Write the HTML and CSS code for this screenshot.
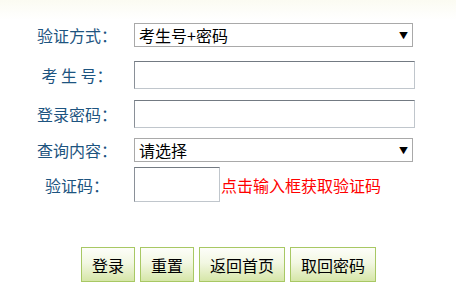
FILE: index.html
```html
<!DOCTYPE html>
<html lang="zh-CN">
<head>
  <meta charset="UTF-8" />
  <meta name="viewport" content="width=device-width, initial-scale=1.0"/>
  <title>成绩查询</title>
  <link rel="stylesheet" href="styles.css">
</head>
<body>
  <form class="query-form">
    <div class="form-grid">
      <label class="form-label">验证方式：</label>
      <div class="select-wrap">
        <select class="form-select">
          <option>考生号+密码</option>
        </select>
        <span class="select-arrow">&#9660;</span>
      </div>

      <label class="form-label">考&nbsp;生&nbsp;号：</label>
      <div><input type="text" class="form-input" /></div>

      <label class="form-label">登录密码：</label>
      <div><input type="password" class="form-input" /></div>

      <label class="form-label">查询内容：</label>
      <div class="select-wrap">
        <select class="form-select">
          <option>请选择</option>
        </select>
        <span class="select-arrow">&#9660;</span>
      </div>

      <label class="form-label">验证码：</label>
      <div class="captcha-row">
        <input type="text" class="form-input captcha-input" />
        <span class="captcha-tip">点击输入框获取验证码</span>
      </div>
    </div>

    <div class="form-buttons">
      <button type="button" class="btn">登录</button>
      <button type="reset" class="btn">重置</button>
      <button type="button" class="btn">返回首页</button>
      <button type="button" class="btn">取回密码</button>
    </div>
  </form>
</body>
</html>
```

FILE: styles.css
```css
* { box-sizing: border-box; }
body {
  margin: 0;
  font-family: "Noto Sans CJK SC", "Liberation Sans", sans-serif;
  font-size: 16px;
  background: linear-gradient(#fbfbf2, #ffffff 20px) no-repeat;
  background-color: #fff;
  min-height: 299px;
}
.query-form {
  padding-top: 15px;
}
.form-grid {
  display: grid;
  grid-template-columns: 114px 281px;
  grid-template-rows: 40px 40px 38px 33px 37px;
  padding-left: 20px;
  align-items: center;
}
.form-label {
  text-align: center;
  color: #1d5480;
  line-height: 20px;
  white-space: nowrap;
}
.select-wrap {
  position: relative;
  width: 279px;
}
.form-select {
  appearance: none;
  -webkit-appearance: none;
  width: 279px;
  height: 24px;
  border: 1px solid #a9a9a9;
  border-radius: 0;
  background: #fff;
  font-family: inherit;
  font-size: 16px;
  line-height: 20px;
  color: #000;
  padding: 0 0 0 4px;
  margin: 0;
}
.select-wrap:nth-of-type(2) .form-select,
.form-grid > .select-wrap:last-of-type .form-select {
  height: 25px;
}
.select-arrow {
  position: absolute;
  right: 5px;
  top: 50%;
  transform: translateY(-50%);
  font-size: 9px;
  line-height: 9px;
  color: #000;
  pointer-events: none;
}
.form-input {
  display: block;
  width: 281px;
  height: 28px;
  margin: 0;
  padding: 0 4px;
  border: 1px solid #c0c6cc;
  border-top-color: #737a82;
  border-left-color: #8a9098;
  border-radius: 0;
  background: #fff;
  font-family: inherit;
  font-size: 16px;
}
.captcha-row {
  display: flex;
  align-items: center;
}
.captcha-input {
  width: 86px;
  height: 35px;
}
.captcha-tip {
  color: #ff0000;
  line-height: 20px;
  white-space: nowrap;
  margin-left: 1px;
}
.form-buttons {
  display: flex;
  justify-content: center;
  gap: 5px;
  margin-top: 44px;
  padding-left: 1px;
}
.btn {
  height: 35px;
  padding: 0 10px;
  border: 1px solid #a8c864;
  border-radius: 0;
  background: linear-gradient(#fdfef9, #f2f7e2 45%, #d6e6a8);
  font-family: inherit;
  font-size: 16px;
  color: #000;
  cursor: pointer;
}
```
